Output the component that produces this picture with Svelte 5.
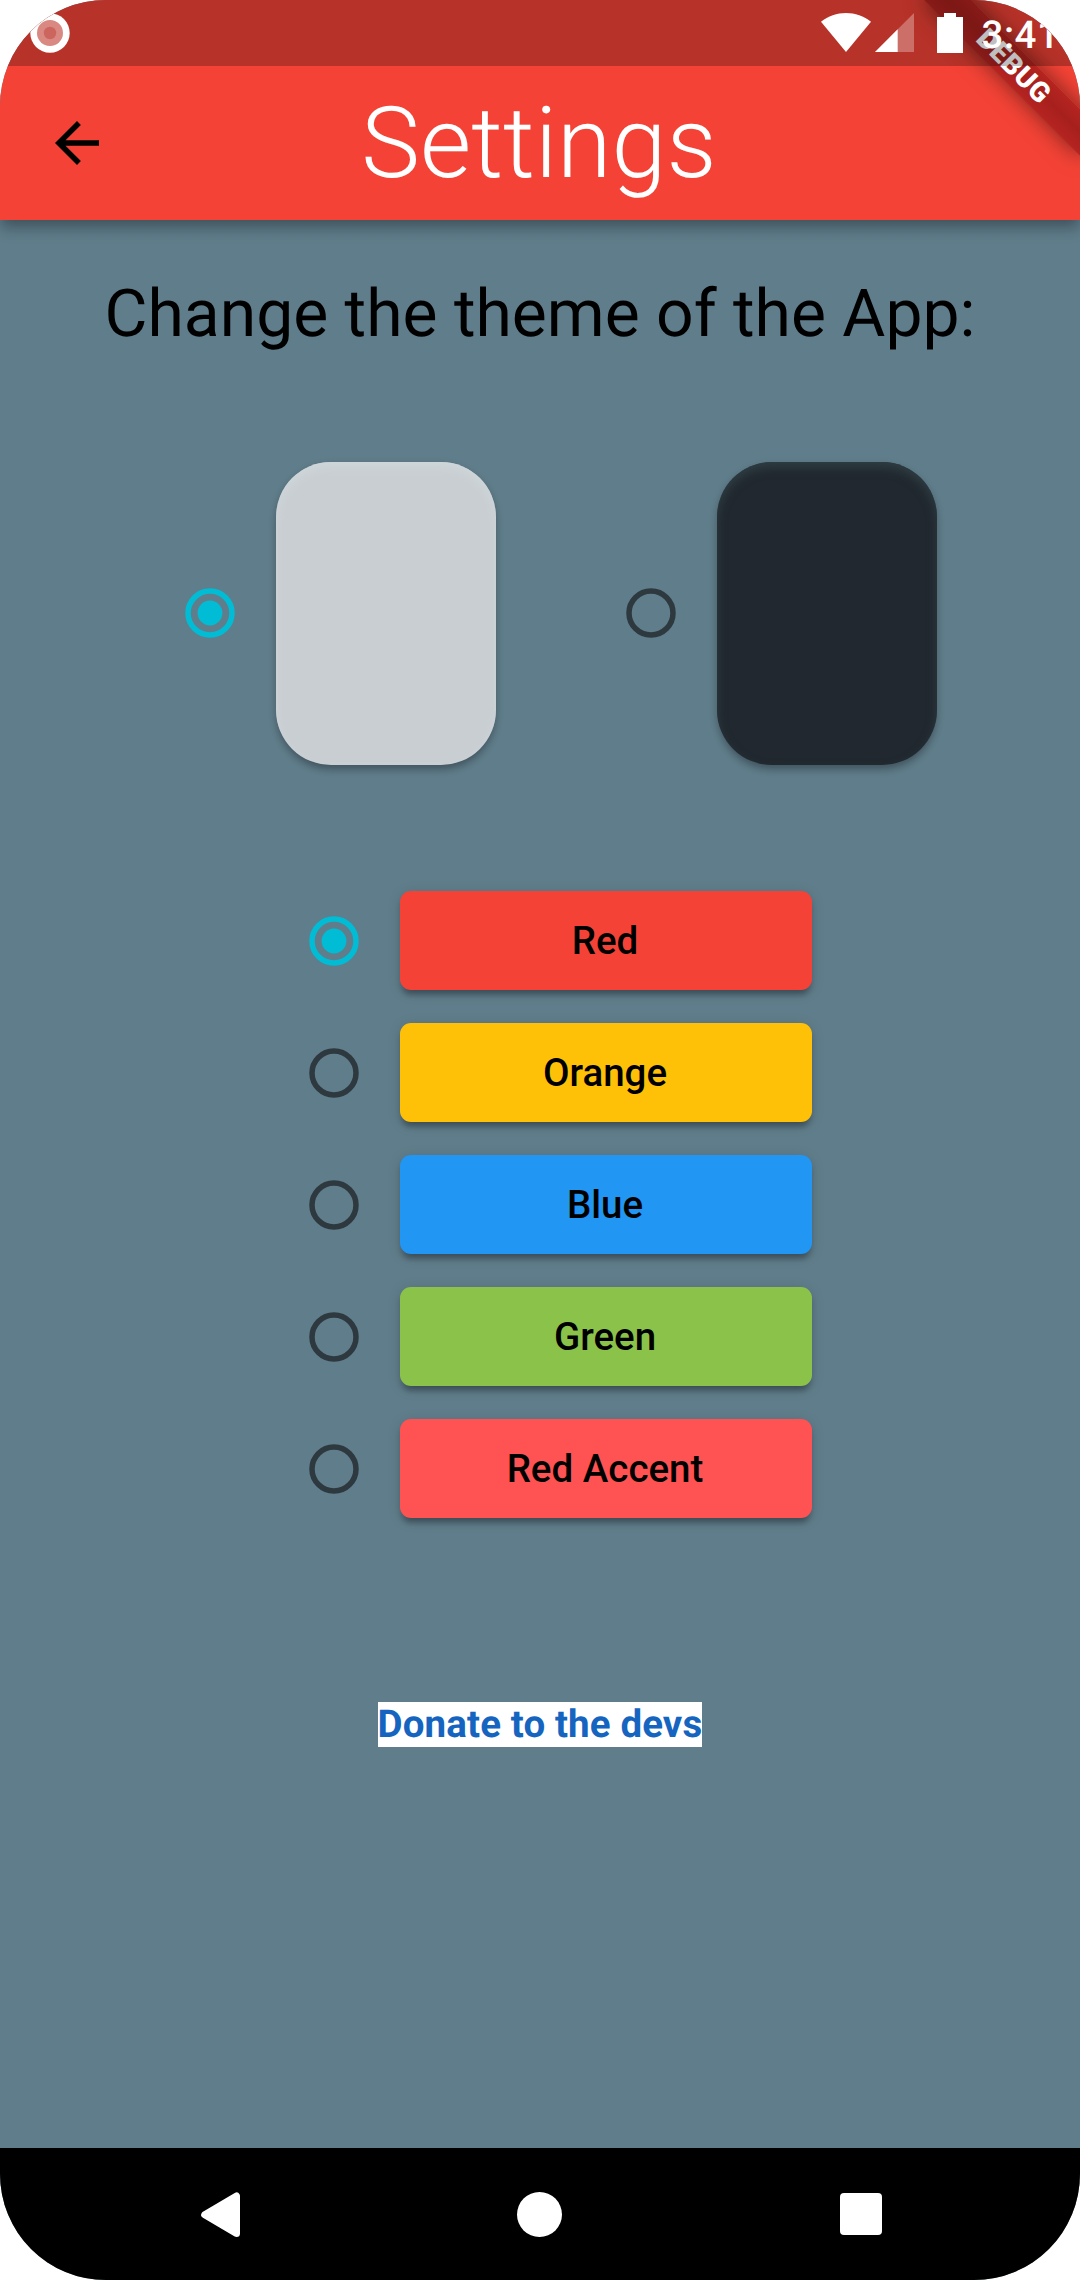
<script>
  const themes = [
    { id: 'light', label: 'Light theme' },
    { id: 'dark', label: 'Dark theme' }
  ];
  const colors = [
    { name: 'Red', value: '#f44336' },
    { name: 'Orange', value: '#ffc107' },
    { name: 'Blue', value: '#2196f3' },
    { name: 'Green', value: '#8bc34a' },
    { name: 'Red Accent', value: '#ff5252' }
  ];
  let theme = $state('light');
  let color = $state('Red');
</script>

{#snippet radio(checked, label, select)}
  <button class="radio" class:checked role="radio" aria-checked={checked} aria-label={label} onclick={select}>
    <svg viewBox="0 0 50 50" width="50" height="50">
      <circle cx="25" cy="25" r="22" fill="none" stroke="currentColor" stroke-width="5.5" />
      {#if checked}<circle cx="25" cy="25" r="12.4" fill="currentColor" />{/if}
    </svg>
  </button>
{/snippet}

<div class="screen">
  <header class="appbar">
    <button class="back" aria-label="Back">
      <svg viewBox="0 0 24 24" width="66" height="66">
        <path d="M20 11H7.83l5.59-5.59L12 4l-8 8 8 8 1.41-1.41L7.83 13H20v-2z" />
      </svg>
    </button>
    <h1>Settings</h1>
  </header>

  <main>
    <h2>Change the theme of the App:</h2>

    <div class="themes" role="radiogroup">
      {#each themes as t}
        <div class="theme">
          {@render radio(theme === t.id, t.label, () => (theme = t.id))}
          <div class="card {t.id}"></div>
        </div>
      {/each}
    </div>

    <div class="colors" role="radiogroup">
      {#each colors as c}
        <div class="color">
          {@render radio(color === c.name, c.name, () => (color = c.name))}
          <button class="swatch" style="background: {c.value}" onclick={() => (color = c.name)}>{c.name}</button>
        </div>
      {/each}
    </div>

    <span class="donate">Donate to the devs</span>
  </main>

  <nav>
    <svg viewBox="0 0 41 48" width="41" height="48" class="nav-back">
      <path d="M38.5 6v37.5L6.7 24.7z" fill="#fff" stroke="#fff" stroke-width="7" stroke-linejoin="round" />
    </svg>
    <span class="nav-home"></span>
    <span class="nav-recent"></span>
  </nav>

  <div class="banner-corner"><div class="banner">DEBUG</div></div>

  <div class="status">
    <svg class="record" viewBox="0 0 40 40" width="40" height="40">
      <circle cx="20" cy="20" r="19.7" fill="#fff" />
      <circle cx="20" cy="20" r="13" fill="#d98882" />
      <circle cx="20" cy="20" r="6.2" fill="#cc655d" />
    </svg>
    <svg class="wifi" viewBox="0 0 50 39" width="50" height="39">
      <path d="M0 8.8C14-2.9 36-2.9 50 8.8L25 39z" fill="#fff" />
    </svg>
    <svg class="signal" viewBox="0 0 39 39" width="39" height="39">
      <path d="M0 39L39 0V39z" fill="#fff" opacity=".3" />
      <path d="M0 39L22.7 16.3V39z" fill="#fff" />
    </svg>
    <svg class="battery" viewBox="0 0 26 40" width="26" height="40">
      <path d="M0 4H7V0H19V4H26V40H0z" fill="#fff" />
    </svg>
    <span class="time">3:41</span>
  </div>
</div>

<style>
  :global(body) {
    background: #fff;
  }
  .screen {
    position: relative;
    display: flex;
    flex-direction: column;
    width: 1080px;
    height: 2280px;
    overflow: hidden;
    border-radius: 106px;
    background: #607d8b;
    color: #000;
    font-family: Roboto, sans-serif;
    text-rendering: geometricPrecision;
  }
  button {
    padding: 0;
    border: 0;
    background: none;
    color: inherit;
    font: inherit;
    cursor: pointer;
  }
  svg {
    display: block;
    flex: none;
  }
  .appbar {
    z-index: 1;
    box-sizing: border-box;
    display: grid;
    grid-template-columns: 110px 1fr 112px;
    align-items: center;
    height: 220px;
    padding-top: 66px;
    background: #f44336;
    box-shadow: 0 5.5px 11px -2.75px rgba(0, 0, 0, 0.2), 0 11px 13px rgba(0, 0, 0, 0.14), 0 2.75px 20px rgba(0, 0, 0, 0.08);
  }
  .back {
    padding-left: 44px;
  }
  h1 {
    margin: 0;
    padding-top: 2px;
    color: #fff;
    font-size: 99px;
    font-weight: 300;
    line-height: 116px;
    text-align: center;
  }
  main {
    flex: 1;
    display: flex;
    flex-direction: column;
    align-items: center;
  }
  h2 {
    margin: 56px 0 0;
    font-size: 66px;
    font-weight: 400;
    line-height: 77px;
    white-space: nowrap;
  }
  .themes {
    display: flex;
    gap: 89px;
    margin-top: 109px;
  }
  .theme,
  .color {
    display: flex;
    align-items: center;
  }
  .theme {
    width: 352px;
  }
  .radio {
    display: grid;
    place-items: center;
    width: 132px;
    height: 132px;
    color: #2d393f;
  }
  .radio.checked {
    color: #00bcd4;
  }
  .card {
    width: 220px;
    height: 302.5px;
    border-radius: 55px;
  }
  .light {
    background: #c9ced2;
    box-shadow: inset 0 5.5px 11px -1px #cfd8dc, 0 5.5px 8px -2px rgba(0, 0, 0, 0.24), 0 3px 8px rgba(0, 0, 0, 0.14);
  }
  .dark {
    background: #21282f;
    box-shadow: inset 0 5.5px 11px -1px #304046, 0 5.5px 8px -2px rgba(0, 0, 0, 0.24), 0 3px 8px rgba(0, 0, 0, 0.14);
  }
  .colors {
    margin-top: 110px;
  }
  .color {
    height: 132px;
  }
  .swatch {
    width: 412.5px;
    height: 99px;
    padding-right: 2px;
    border-radius: 11px;
    font-size: 38.5px;
    font-weight: 500;
    box-shadow: 0 8px 5.5px -5.5px rgba(0, 0, 0, 0.2), 0 5.5px 5.5px rgba(0, 0, 0, 0.14), 0 2.75px 13.75px rgba(0, 0, 0, 0.12);
  }
  .donate {
    box-sizing: border-box;
    height: 44.5px;
    margin-top: 167.5px;
    padding-top: 1px;
    background: #fff;
    color: #1565c0;
    font-size: 38.5px;
    font-weight: 700;
    line-height: 44.5px;
    letter-spacing: 0.12px;
  }
  nav {
    display: flex;
    align-items: center;
    justify-content: space-between;
    box-sizing: border-box;
    height: 132px;
    padding: 0 198px;
    background: #000;
  }
  .nav-back {
    overflow: visible;
  }
  .nav-home {
    width: 45px;
    height: 45px;
    border-radius: 50%;
    background: #fff;
  }
  .nav-recent {
    width: 42px;
    height: 42px;
    border-radius: 4px;
    background: #fff;
  }
  /* The ribbon pivots on the top-right corner of the screen */
  .banner-corner {
    position: absolute;
    z-index: 2;
    top: 0;
    right: 0;
    width: 0;
    height: 0;
    transform: rotate(45deg);
  }
  .banner {
    position: absolute;
    top: 77px;
    left: -110px;
    width: 220px;
    height: 33px;
    background:
      linear-gradient(rgba(183, 28, 28, 0.63), rgba(183, 28, 28, 0.63)),
      linear-gradient(rgba(0, 0, 0, 0.27), rgba(0, 0, 0, 0.43), rgba(0, 0, 0, 0.27));
    box-shadow: 0 0 22px rgba(0, 0, 0, 0.5);
    color: #fff;
    font-size: 28px;
    font-weight: 900;
    line-height: 33px;
    letter-spacing: 0.4px;
    text-align: center;
  }
  /* Translucent system bar laid over the app bar and ribbon */
  .status {
    position: absolute;
    z-index: 3;
    inset: 0 0 auto 0;
    display: flex;
    align-items: flex-start;
    box-sizing: border-box;
    height: 66px;
    padding: 13px 0 0 30px;
    background: rgba(0, 0, 0, 0.25);
    color: #fff;
  }
  .wifi {
    margin-left: 751px;
  }
  .signal {
    margin-left: 4px;
  }
  .battery {
    margin-left: 23px;
  }
  .time {
    margin-left: 18.5px;
    padding-top: 1px;
    font-size: 38.5px;
    font-weight: 500;
    line-height: 44px;
    letter-spacing: 0.5px;
  }
</style>
